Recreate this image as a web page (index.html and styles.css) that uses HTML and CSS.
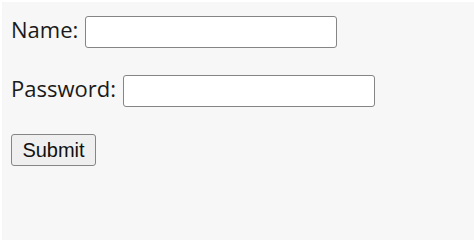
FILE: index.html
```html
<!DOCTYPE html>
<html lang="en">
<head>
    <meta charset="UTF-8">
    <meta name="viewport" content="width=device-width, initial-scale=1.0">
    <title>Login</title>
    <link rel="stylesheet" href="styles.css">
</head>
<body>
    <div class="page">
        <form class="login-form">
            <div class="form-row">
                <label for="name">Name:</label>
                <input type="text" id="name" name="name">
            </div>
            <div class="form-row">
                <label for="password">Password:</label>
                <input type="password" id="password" name="password">
            </div>
            <div class="form-row">
                <button type="submit" class="btn">Submit</button>
            </div>
        </form>
    </div>
</body>
</html>
```

FILE: styles.css
```css
html, body {
    margin: 0;
    padding: 0;
    height: 100%;
}
body {
    background-color: #ffffff;
    padding: 2px 0 0 2px;
    box-sizing: border-box;
}
.page {
    background-color: #f7f7f7;
    height: 100%;
    box-sizing: border-box;
    padding: 14px 0 0 9px;
}
.login-form {
    display: flex;
    flex-direction: column;
    gap: 27px;
}
.form-row {
    display: flex;
    align-items: center;
    gap: 7px;
    height: 32px;
}
.form-row label {
    font-family: "Open Sans", sans-serif;
    font-size: 22px;
    color: #1a1a1a;
    margin-bottom: 6px;
}
.form-row input {
    width: 252px;
    height: 32px;
    box-sizing: border-box;
    margin: 0;
    padding: 2px 4px;
    border: 1px solid #858585;
    border-radius: 3px;
    background-color: #ffffff;
    font-family: "Open Sans", sans-serif;
    font-size: 16px;
}
.btn {
    width: 85px;
    height: 32px;
    box-sizing: border-box;
    margin: 0;
    padding: 0;
    font-family: "Liberation Sans", Arial, sans-serif;
    font-size: 20px;
    color: #111;
    background-color: #efefef;
    border: 1px solid #858585;
    border-radius: 3px;
}
```
